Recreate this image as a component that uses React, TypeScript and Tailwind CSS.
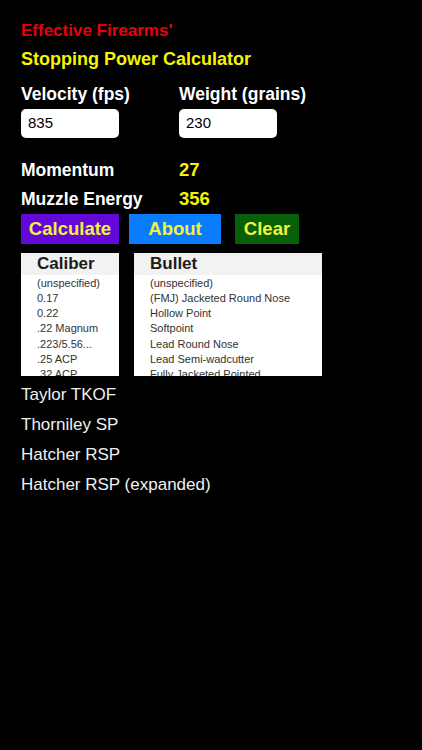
const calibers = ['(unspecified)', '0.17', '0.22', '.22 Magnum', '.223/5.56...', '.25 ACP', '.32 ACP'];
const bullets = [
  '(unspecified)',
  '(FMJ) Jacketed Round Nose',
  'Hollow Point',
  'Softpoint',
  'Lead Round Nose',
  'Lead Semi-wadcutter',
  'Fully Jacketed Pointed',
];
const formulas = ['Taylor TKOF', 'Thorniley SP', 'Hatcher RSP', 'Hatcher RSP (expanded)'];

function PickerList({ title, items, width }: { title: string; items: string[]; width: string }) {
  return (
    <div className={`${width} h-[123px] bg-white overflow-hidden`}>
      <div className="h-[22px] bg-[#f2f2f2] pl-[16px] text-[17px] leading-[22px] font-bold text-[#1c1c1c]">{title}</div>
      <div className="pl-[16px] pt-[0.5px]">
        {items.map((item) => (
          <div key={item} className="text-[11px] leading-[15.25px] text-[#333333] whitespace-nowrap">
            {item}
          </div>
        ))}
      </div>
    </div>
  );
}

export default function App() {
  return (
    <div
      className="w-[422px] h-[750px] bg-black px-[21px] pt-[21px] overflow-hidden"
      style={{ fontFamily: '"Liberation Sans", Arial, sans-serif' }}
    >
      <div className="text-[17px] leading-[20px] font-bold text-[#e8000b]">Effective Firearms'</div>
      <div className="mt-[8px] text-[18px] leading-[20px] font-bold text-[#f5f500]">Stopping Power Calculator</div>

      <div className="mt-[15px] flex">
        <div className="w-[158px]">
          <div className="text-[17.5px] leading-[20px] font-bold text-white">Velocity (fps)</div>
          <div className="mt-[5px] w-[98px] h-[29px] bg-white rounded-[5px] pl-[7px] flex items-center text-[15px] text-black">
            835
          </div>
        </div>
        <div>
          <div className="text-[17.5px] leading-[20px] font-bold text-white">Weight (grains)</div>
          <div className="mt-[5px] w-[98px] h-[29px] bg-white rounded-[5px] pl-[7px] flex items-center text-[15px] text-black">
            230
          </div>
        </div>
      </div>

      <div className="mt-[22px] flex text-[17.5px] leading-[20px] font-bold">
        <div className="w-[158px] text-white">Momentum</div>
        <div className="text-[#f5f500] text-[18.5px]">27</div>
      </div>
      <div className="mt-[9px] flex text-[17.5px] leading-[20px] font-bold">
        <div className="w-[158px] text-white">Muzzle Energy</div>
        <div className="text-[#f5f500] text-[18.5px]">356</div>
      </div>

      <div className="mt-[5px] flex text-[18.5px] font-bold text-[#f2f23c]">
        <div className="w-[98px] h-[30px] bg-[#6208d8] flex items-center justify-center">Calculate</div>
        <div className="ml-[10px] w-[92px] h-[30px] bg-[#0a7cff] flex items-center justify-center">About</div>
        <div className="ml-[14px] w-[64px] h-[30px] bg-[#075f07] flex items-center justify-center">Clear</div>
      </div>

      <div className="mt-[9px] flex">
        <PickerList title="Caliber" items={calibers} width="w-[98px]" />
        <div className="ml-[15px]">
          <PickerList title="Bullet" items={bullets} width="w-[188px]" />
        </div>
      </div>

      <div className="mt-[4px] text-[17px] leading-[30px] text-[#f0f0f0]">
        {formulas.map((f) => (
          <div key={f}>{f}</div>
        ))}
      </div>
    </div>
  );
}
